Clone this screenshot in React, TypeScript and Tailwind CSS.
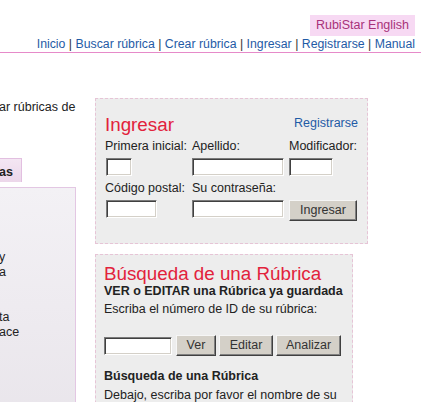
import React from "react";

const inputCls =
  "block h-[18px] bg-white border border-t-[#7a7a7a] border-l-[#7a7a7a] border-b-white border-r-white shadow-[inset_1px_1px_0_#404040,inset_-1px_-1px_0_#d4d0c8]";
const btnCls =
  "h-[21px] bg-[#d4d0c8] text-[#333] text-[12.5px] leading-[15px] border border-t-[#f6f6f6] border-l-[#f6f6f6] border-r-[#404040] border-b-[#404040] shadow-[inset_-1px_-1px_0_#808080] flex items-center justify-center";

function Sep() {
  return <span className="text-[#333]"> | </span>;
}

export default function App() {
  const link = "text-[#1f5ba6]";
  return (
    <div className="w-[421px] h-[402px] overflow-hidden bg-white text-[12.5px] leading-[15px] text-[#222] font-['Liberation_Sans',Arial,sans-serif]">
      <header className="flex flex-col items-end pt-[15px] pr-[6px]">
        <div className="h-[21px] w-[105px] bg-[#f7d9f3] text-[#a8327a] flex items-center justify-center">
          RubiStar English
        </div>
        <nav className="mt-[1px] text-[12.3px] leading-[15px] whitespace-nowrap">
          <a className={link}>Inicio</a>
          <Sep />
          <a className={link}>Buscar rúbrica</a>
          <Sep />
          <a className={link}>Crear rúbrica</a>
          <Sep />
          <a className={link}>Ingresar</a>
          <Sep />
          <a className={link}>Registrarse</a>
          <Sep />
          <a className={link}>Manual</a>
        </nav>
      </header>
      <div className="h-px bg-[#e68ac9]" />

      <div className="flex items-start mt-[45px]">
        {/* left column (scrolled, partly hidden) */}
        <div className="w-[76px] shrink-0 overflow-hidden pt-[1.5px]">
          <p className="whitespace-nowrap -ml-[1px]">ar rúbricas de</p>
          <div className="mt-[43.5px] h-[24px] w-[24px] bg-gradient-to-b from-[#f4e6f3] to-[#ecd7ea] border-t border-r border-[#e2bfe0] font-bold pt-[6px] leading-[15px] -ml-[2px] pl-[1px]">
            as
          </div>
          <div className="mt-[5px] h-[260px] border-t border-r border-[#e3c7e3] bg-gradient-to-b from-[#f3f1f5] to-[#e8e4ea] pt-[62px] whitespace-nowrap">
            <div className="-ml-[1px]">y</div>
            <div className="-ml-[1px]">a</div>
            <div className="h-[15px]" />
            <div className="h-[15px]" />
            <div className="-ml-[1px]">ta</div>
            <div className="-ml-[1px]">ace</div>
          </div>
        </div>

        {/* right boxes */}
        <div className="ml-[19px] flex flex-col gap-[10px]">
          <section className="w-[273px] h-[146px] border border-dashed border-[#e6c4d6] bg-[#ededed] pl-[9px] pr-[9px] pt-[14.5px]">
            <div className="flex justify-between items-start">
              <h2 className="text-[18.8px] leading-[21px] text-[#e2223c]">Ingresar</h2>
              <a className={`${link} mt-[2.5px]`}>Registrarse</a>
            </div>
            <div className="grid grid-cols-[87px_97px_1fr] mt-[4.5px]">
              <div className="whitespace-nowrap">Primera inicial:</div>
              <div>Apellido:</div>
              <div>Modificador:</div>
              <div className="mt-[4px]">
                <input className={`${inputCls} w-[26px] ml-[1px]`} />
              </div>
              <div className="mt-[4px]">
                <input className={`${inputCls} w-[92px]`} />
              </div>
              <div className="mt-[4px]">
                <input className={`${inputCls} w-[44px]`} />
              </div>
              <div className="mt-[5px] whitespace-nowrap">Código postal:</div>
              <div className="mt-[5px] whitespace-nowrap">Su contraseña:</div>
              <div className="mt-[5px]" />
              <div className="mt-[4px]">
                <input className={`${inputCls} w-[51px] ml-[1px]`} />
              </div>
              <div className="mt-[4px]">
                <input className={`${inputCls} w-[92px]`} />
              </div>
              <div className="mt-[4px]">
                <button className={`${btnCls} w-[68px]`}>Ingresar</button>
              </div>
            </div>
          </section>

          <section className="w-[258px] h-[200px] border border-dashed border-[#e6c4d6] bg-[#ededed] pl-[8px] pt-[8px]">
            <h2 className="text-[18.8px] leading-[21px] text-[#e2223c] whitespace-nowrap">
              Búsqueda de una Rúbrica
            </h2>
            <p className="font-bold whitespace-nowrap">VER o EDITAR una Rúbrica ya guardada</p>
            <p className="mt-[3px] whitespace-nowrap">Escriba el número de ID de su rúbrica:</p>
            <div className="mt-[18px] flex items-center">
              <input className={`${inputCls} w-[68px]`} />
              <button className={`${btnCls} w-[40px] ml-[4px]`}>Ver</button>
              <button className={`${btnCls} w-[54px] ml-[3px]`}>Editar</button>
              <button className={`${btnCls} w-[65px] ml-[3px]`}>Analizar</button>
            </div>
            <p className="mt-[13px] font-bold whitespace-nowrap">Búsqueda de una Rúbrica</p>
            <p className="mt-[3.5px] whitespace-nowrap">Debajo, escriba por favor el nombre de su</p>
          </section>
        </div>
      </div>
    </div>
  );
}
